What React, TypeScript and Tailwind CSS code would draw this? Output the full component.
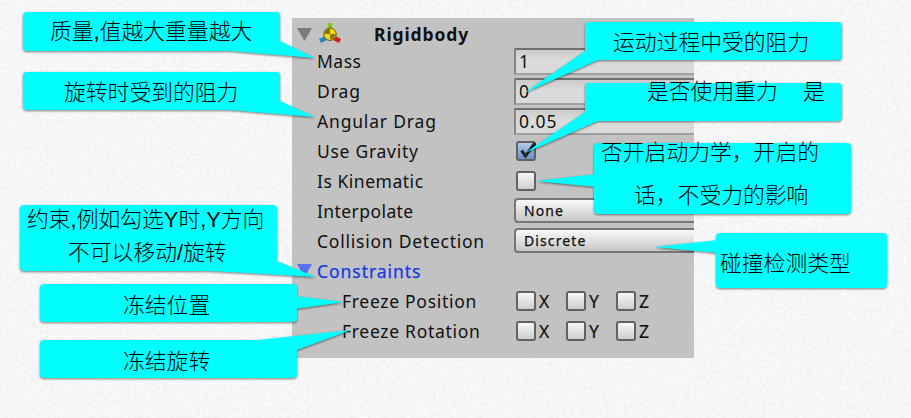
import React from "react";

const latin = "font-['Noto_Sans',sans-serif]";

function Label({ text, className = "" }: { text: string; className?: string }) {
  return <span className={`whitespace-pre text-[17.5px] leading-[30px] text-[#111] ${latin} ${className}`}>{text}</span>;
}

function Row({ text, spacing, children }: { text: string; spacing: string; children?: React.ReactNode }) {
  return (
    <div className="flex h-[30px] pl-[25px]">
      <div className="w-[197px] shrink-0"><Label text={text} className={spacing} /></div>
      {children}
    </div>
  );
}

function Field({ value }: { value: string }) {
  return (
    <div className="mt-[2px] flex h-[27px] flex-1 items-center border-y-2 border-l-2 border-t-[#707070] border-b-[#a0a0a0] border-l-[#858585] bg-linear-to-b from-[#cbcbcb] to-[#dadada] to-40% pl-[3px]">
      <Label text={value} className="-mt-px tracking-[0.9px]" />
    </div>
  );
}

function Check({ checked = false }: { checked?: boolean }) {
  return (
    <div className={`mt-[5px] ml-[2px] h-5 w-5 shrink-0 rounded-[3px] border-2 border-[#626262] bg-linear-to-b ${checked ? "from-[#b3cbed] to-[#698fc9]" : "from-[#f8f8f8] to-[#cecece]"}`}>
      {checked && (
        <svg className="block overflow-visible" width="16" height="16" viewBox="0 0 16 16">
          <path d="M3.5 7.5 7.5 13 17 0" fill="none" stroke="#20242c" strokeWidth="3" />
        </svg>
      )}
    </div>
  );
}

function Popup({ value }: { value: string }) {
  return (
    <div className="mt-[2px] flex h-[25px] flex-1 items-center rounded-l-[4px] border-y-2 border-l-2 border-[#777] bg-linear-to-b from-[#f9f9f9] to-[#c8c8c8] pl-[8px]">
      <span className={`text-[14px] tracking-[1.1px] text-[#111] [-webkit-text-stroke:0.25px_#111] ${latin}`}>{value}</span>
    </div>
  );
}

function FreezeRow({ text, spacing }: { text: string; spacing: string }) {
  return (
    <div className="flex h-[30px] pl-[50px]">
      <div className="w-[172px] shrink-0"><Label text={text} className={spacing} /></div>
      {["X", "Y", "Z"].map((axis) => (
        <div key={axis} className="flex w-[50px]">
          <Check />
          <Label text={axis} className="ml-[3px] [-webkit-text-stroke:0.2px_#111]" />
        </div>
      ))}
    </div>
  );
}

function Callout({ box, points, children }: { box: string; points: string; children: React.ReactNode }) {
  return (
    <div className={`absolute ${box}`}>
      <div className="absolute inset-0 [filter:drop-shadow(0_1.5px_1px_rgba(0,0,0,0.5))]">
        <div className="absolute inset-0 rounded-[4px] bg-[#00ffff]" />
        <svg className="absolute top-0 left-0 overflow-visible" width="1" height="1">
          <polygon points={points} fill="#00ffff" />
        </svg>
      </div>
      <div className="relative h-full whitespace-pre font-['Liberation_Sans','Noto_Sans_CJK_SC',sans-serif] text-[21.8px] leading-[32px] font-light text-black">{children}</div>
    </div>
  );
}

export default function App() {
  return (
    <div className="relative h-[418px] w-[911px] overflow-hidden bg-[#f6f6f6]">
      <svg className="absolute inset-0" width="911" height="418">
        <filter id="paper" x="0" y="0" width="100%" height="100%" colorInterpolationFilters="sRGB">
          <feTurbulence type="fractalNoise" baseFrequency="0.3" numOctaves="4" seed="5" />
          <feColorMatrix values="0.06 0 0 0 0.935  0.06 0 0 0 0.935  0.06 0 0 0 0.935  0 0 0 0 1" />
        </filter>
        <rect width="911" height="418" filter="url(#paper)" />
      </svg>
      <div className="relative pt-[18px] pl-[292px]">
        <div className="h-[340px] w-[402px] bg-[#c2c2c2]">
          <div className="flex h-7 pl-[5px]">
            <svg className="mt-[10px]" width="15" height="13"><path d="M0 0h15l-7.5 13z" fill="#7c7c7c" /></svg>
            <svg className="mt-[5px] ml-[6px]" width="24" height="21" viewBox="0 0 24 21">
              <path d="M12 13 2 18" stroke="#2685ca" strokeWidth="4.5" />
              <path d="m12 13 10 5" stroke="#cf2020" strokeWidth="4.5" />
              <path d="M12 11V0" stroke="#82c91e" strokeWidth="4.5" />
              <circle cx="12" cy="11.2" r="6.2" fill="#f5d90a" stroke="#6b5a10" strokeWidth="1" />
              <path d="M12 11V5.5A5.5 5.5 0 0 0 6.5 11zM12 11v5.5a5.5 5.5 0 0 0 5.5-5.5z" fill="#8a7608" />
            </svg>
            <span className={`mt-[1px] ml-[32px] text-[17.5px] leading-[30px] font-bold tracking-[0.9px] text-[#111] ${latin}`}>Rigidbody</span>
          </div>
          <Row text="Mass" spacing="tracking-[0.5px]"><Field value="1" /></Row>
          <Row text="Drag" spacing="tracking-[0.9px]"><Field value="0" /></Row>
          <Row text="Angular Drag" spacing="tracking-[0.82px]"><Field value="0.05" /></Row>
          <Row text="Use Gravity" spacing="tracking-[0.72px]"><Check checked /></Row>
          <Row text="Is Kinematic" spacing="tracking-[0.52px]"><Check /></Row>
          <Row text="Interpolate" spacing="tracking-[0.42px]"><Popup value="None" /></Row>
          <Row text="Collision Detection" spacing="tracking-[0.76px]"><Popup value="Discrete" /></Row>
          <div className="flex h-[30px] pl-[5px]">
            <svg className="mt-[8px] mr-[5px]" width="15" height="13"><path d="M0 0h15l-7.5 13z" fill="#5970ee" /></svg>
            <span className={`text-[17.5px] leading-[30px] tracking-[0.96px] text-[#1737e6] [-webkit-text-stroke:0.25px_#1737e6] ${latin}`}>Constraints</span>
          </div>
          <FreezeRow text="Freeze Position" spacing="tracking-[0.7px]" />
          <FreezeRow text="Freeze Rotation" spacing="tracking-[0.7px]" />
        </div>
      </div>

      <Callout box="left-[23px] top-[12px] w-[257px] h-[39px]" points="257,29 292,46 207,39 250,20">
        <div className="pt-[4px] pl-[27px]">质量,值越大重量越大</div>
      </Callout>
      <Callout box="left-[23px] top-[72px] w-[257px] h-[38px]" points="257,29 292,45 207,38 250,20">
        <div className="pt-[5px] pl-[41px]">旋转时受到的阻力</div>
      </Callout>
      <Callout box="left-[585px] top-[22px] w-[257px] h-[38px]" points="0,29 -61,71 13,38 13,20">
        <div className="pt-[5px] pl-[28px]">运动过程中受的阻力</div>
      </Callout>
      <Callout box="left-[585px] top-[83px] w-[257px] h-[38px]" points="0,29 -60,70 13,38 13,20">
        <div className="-mt-[7px] flex pl-[62px]"><span className="w-[156px]">是否使用重力</span><span>是</span></div>
      </Callout>
      <Callout box="left-[594px] top-[143px] w-[257px] h-[71px]" points="2,31 -58,38 2,44">
        <div className="-mt-[6px] pl-[7px]">否开启动力学，开启的</div>
        <div className="mt-[11px] pl-[40px]">话，不受力的影响</div>
      </Callout>
      <Callout box="left-[716px] top-[233px] w-[171px] h-[55px]" points="2,7 -62,14 2,20">
        <div className="pt-[15px] pl-[4px]">碰撞检测类型</div>
      </Callout>
      <Callout box="left-[20px] top-[205px] w-[257px] h-[66px]" points="257,56 296,72 190,66 250,40">
        <div className="-mt-px pl-[7px]">约束,例如勾选Y时,Y方向</div>
        <div className="mt-px pl-[48px]">不可以移动/旋转</div>
      </Callout>
      <Callout box="left-[40px] top-[284px] w-[257px] h-[38px]" points="255,12 304,18 255,25">
        <div className="pt-[6px] pl-[83px]">冻结位置</div>
      </Callout>
      <Callout box="left-[40px] top-[340px] w-[257px] h-[38px]" points="218,0 311,-10 257,10 240,20">
        <div className="pt-[6px] pl-[83px]">冻结旋转</div>
      </Callout>
    </div>
  );
}
